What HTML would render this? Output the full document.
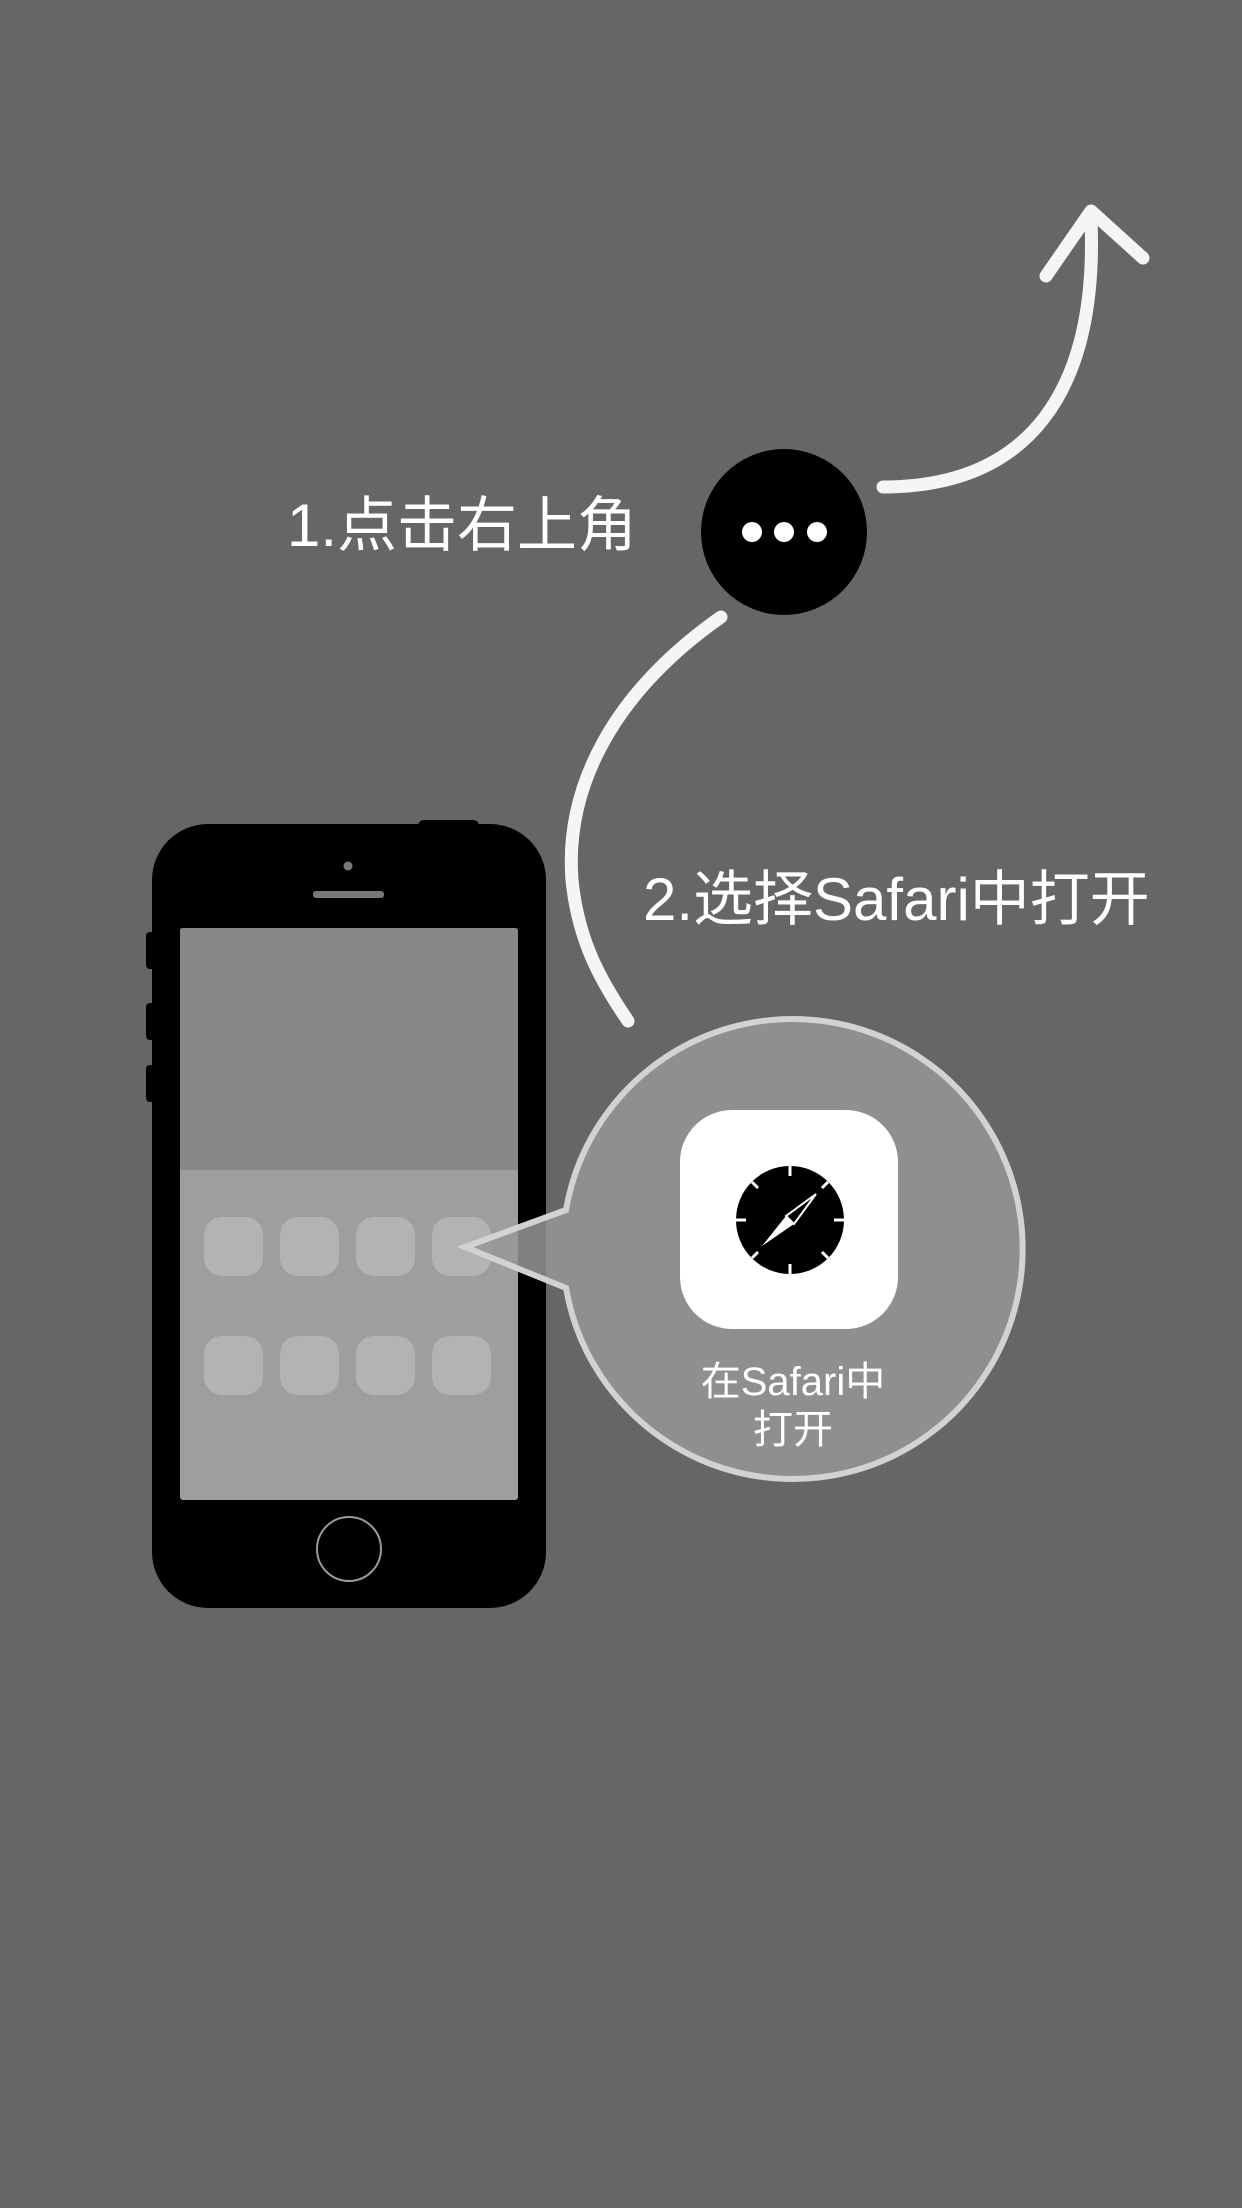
<!DOCTYPE html>
<html><head><meta charset="utf-8"><style>
html,body{margin:0;padding:0;background:#666;}
body{width:1242px;height:2208px;position:relative;overflow:hidden;font-family:"Liberation Sans","Noto Sans CJK SC",sans-serif;}
.t{position:absolute;color:#fff;white-space:nowrap;}
</style></head><body>
<svg width="1242" height="2208" style="position:absolute;left:0;top:0">
<path d="M883 487 C1030 487 1098 390 1091 220" fill="none" stroke="#f4f5f4" stroke-width="13" stroke-linecap="round"/>
<path d="M1046 276 L1091 211 L1143 258" fill="none" stroke="#f4f5f4" stroke-width="13" stroke-linecap="round" stroke-linejoin="round"/>
<path d="M721 617 C610 695 565 790 572 880 C578 940 600 980 628 1021" fill="none" stroke="#f4f5f4" stroke-width="13" stroke-linecap="round"/>
<circle cx="784" cy="532" r="83" fill="#000"/>
<circle cx="752" cy="532" r="10" fill="#fff"/><circle cx="784" cy="532" r="10" fill="#fff"/><circle cx="817" cy="532" r="10" fill="#fff"/>
<rect x="418" y="820" width="61" height="14" rx="6" fill="#000"/>
<rect x="146" y="932" width="12" height="37" rx="4" fill="#000"/>
<rect x="146" y="1003" width="12" height="37" rx="4" fill="#000"/>
<rect x="146" y="1065" width="12" height="37" rx="4" fill="#000"/>
<rect x="152" y="824" width="394" height="784" rx="56" fill="#000"/>
<circle cx="348" cy="866" r="4.5" fill="#777"/>
<rect x="313" y="891" width="71" height="7" rx="3" fill="#777"/>
<rect x="180" y="928" width="338" height="572" rx="3" fill="#9d9e9d"/>
<path d="M183 928 H515 Q518 928 518 931 V1170 H180 V931 Q180 928 183 928Z" fill="#888"/>
<g fill="#b3b3b3">
<rect x="204" y="1217" width="59" height="59" rx="18"/><rect x="280" y="1217" width="59" height="59" rx="18"/><rect x="356" y="1217" width="59" height="59" rx="18"/><rect x="432" y="1217" width="59" height="59" rx="18"/>
<rect x="204" y="1336" width="59" height="59" rx="18"/><rect x="280" y="1336" width="59" height="59" rx="18"/><rect x="356" y="1336" width="59" height="59" rx="18"/><rect x="432" y="1336" width="59" height="59" rx="18"/>
</g>
<circle cx="349" cy="1549" r="32" fill="none" stroke="#999" stroke-width="2"/>
<path d="M566 1210 A230 230 0 1 1 566 1288 L465 1247 Z" fill="rgba(150,150,150,0.85)" stroke="#d2d2d2" stroke-width="6" stroke-linejoin="miter"/>
<rect x="680" y="1110" width="218" height="219" rx="52" fill="#fff"/>
<circle cx="790" cy="1220" r="54" fill="#000"/>
<g stroke="#fff" stroke-width="3">
<line x1="790" y1="1166" x2="790" y2="1176"/><line x1="790" y1="1264" x2="790" y2="1274"/>
<line x1="736" y1="1220" x2="746" y2="1220"/><line x1="834" y1="1220" x2="844" y2="1220"/>
<line x1="752" y1="1182" x2="758" y2="1188"/><line x1="822" y1="1252" x2="828" y2="1258"/>
<line x1="752" y1="1258" x2="758" y2="1252"/><line x1="822" y1="1188" x2="828" y2="1182"/>
</g>
<path d="M816 1194 L794 1224 L786 1216 Z" fill="none" stroke="#fff" stroke-width="2"/>
<path d="M762 1246 L786 1216 L794 1224 Z" fill="#fff"/>
</svg>
<div class="t" style="left:287px;top:484px;font-size:60px;line-height:84px;">1.点击右上角</div>
<div class="t" style="left:643px;top:860px;font-size:60px;line-height:80px;">2.选择Safari中打开</div>
<div class="t" style="left:693px;top:1358px;width:200px;text-align:center;font-size:40px;line-height:48px;">在Safari中<br>打开</div>
</body></html>
